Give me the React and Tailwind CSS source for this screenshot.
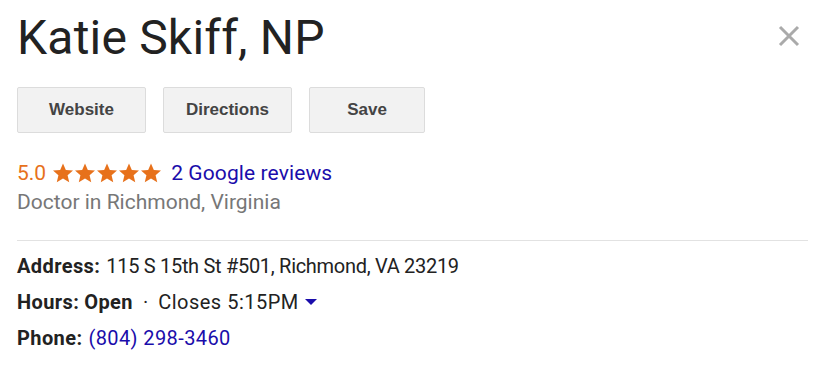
import React from 'react';

const Star = () => (
  <svg width="22" height="22" viewBox="0 0 24 24" className="fill-[#e7711b]">
    <path d="M12 1.5l3.1 7.2 7.8.7-5.9 5.1 1.8 7.6L12 18.1l-6.8 4 1.8-7.6-5.9-5.1 7.8-.7z" />
  </svg>
);

const Btn = ({ label, w }) => (
  <button
    className={`h-[46px] ${w} rounded-[2px] border border-[#dcdcdc] bg-[#f2f2f2] text-[17px] font-bold text-[#444] font-['Liberation_Sans',Arial,sans-serif]`}
  >
    {label}
  </button>
);

export default function App() {
  return (
    <div className="w-[826px] h-[373px] bg-white font-['Roboto',Arial,sans-serif] text-[#222] pl-[17px] pr-[18px] pt-[6px]">
      <div className="flex items-start justify-between">
        <h1 className="text-[48px] leading-[64px] text-[#222] tracking-[0.2px]">Katie Skiff, NP</h1>
        <svg width="22" height="22" viewBox="0 0 22 22" className="mt-[19px] mr-[8px]">
          <path d="M2 2L20 20M20 2L2 20" stroke="#aaa" strokeWidth="3" />
        </svg>
      </div>

      <div className="flex gap-[17px] mt-[17px]">
        <Btn label="Website" w="w-[129px]" />
        <Btn label="Directions" w="w-[129px]" />
        <Btn label="Save" w="w-[116px]" />
      </div>

      <div className="mt-[26px] flex items-center text-[21px] leading-[28px]">
        <span className="text-[#e7711b]">5.0</span>
        <span className="flex ml-[6px] mr-[9px]">
          <Star /><Star /><Star /><Star /><Star />
        </span>
        <span className="text-[#1a0dab] tracking-[0.1px]">2 Google reviews</span>
      </div>
      <div className="text-[21px] leading-[30px] text-[#777]">Doctor in Richmond, Virginia</div>

      <div className="border-t border-[#e2e2e2] mt-[23px] pt-[7px] text-[20px] leading-[36px]">
        <div className="flex">
          <span className="font-bold tracking-[0.4px]">Address:</span>
          <span className="ml-[6px] tracking-[-0.3px]">115 S 15th St #501, Richmond, VA 23219</span>
        </div>
        <div className="flex items-center">
          <span className="font-bold tracking-[0.4px]">Hours:</span>
          <span className="font-bold tracking-[0.4px] ml-[5px]">Open</span>
          <span className="mx-[10px]">·</span>
          <span className="tracking-[0.5px]">Closes 5:15PM</span>
          <svg width="12" height="8" viewBox="0 0 12 8" className="ml-[6px]">
            <path d="M0 1h12L6 7z" fill="#1a0dab" />
          </svg>
        </div>
        <div className="flex">
          <span className="font-bold tracking-[0.4px]">Phone:</span>
          <span className="ml-[6px] text-[#1a0dab] tracking-[0.4px]">(804) 298-3460</span>
        </div>
      </div>
    </div>
  );
}
